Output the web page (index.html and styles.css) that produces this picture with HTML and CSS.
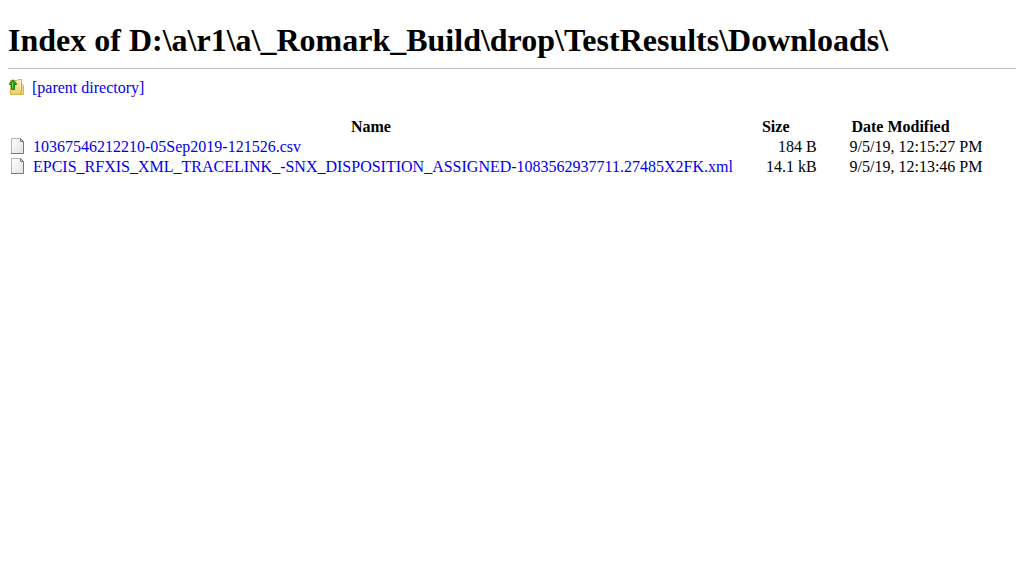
FILE: index.html
```html
<!DOCTYPE html>
<html lang="en">
<head>
<meta charset="utf-8">
<title>Index of D:\a\r1\a\_Romark_Build\drop\TestResults\Downloads\</title>
<link rel="stylesheet" href="styles.css">
</head>
<body>
<svg class="defs" aria-hidden="true">
<defs>
<linearGradient id="paper" x1="0" y1="0" x2="1" y2="1"><stop offset="0" stop-color="#fff"/><stop offset="1" stop-color="#e2e2e2"/></linearGradient>
<linearGradient id="folder" x1="0" y1="0" x2="0" y2="1"><stop offset="0" stop-color="#fbeeb4"/><stop offset="1" stop-color="#edcd68"/></linearGradient>
<symbol id="file" viewBox="0 0 16 16"><path d="M2.500.5h9l3 3v12h-12z" fill="url(#paper)"/><path d="M2.500 15.500V.5h9" fill="none" stroke="#b4b4b4"/><path d="M2 15.500h12.500v-12" fill="none" stroke="#777"/><path d="M11.500.5v3h3z" fill="#ddd" stroke="#777"/></symbol>
</defs>
</svg>
<h1 class="title">Index of D:\a\r1\a\_Romark_Build\drop\TestResults\Downloads\</h1>
<div class="parent">
<svg class="icon" viewBox="0 0 16 16" aria-hidden="true"><path d="M2.500 1.500H9l1-1h3.500v4l2 2v9h-13z" fill="url(#folder)" stroke="#d6b65c"/><path d="M13.500 1v10l-1 4" fill="none" stroke="#c9a64a"/><path d="M12.500 1v10" stroke="#fff6d0"/><path d="M5 .7 8.500 4.500V5.500H6.500v5h-3v-5h-2v-1z" fill="#2fa324" stroke="#1c8018"/><path d="M4.500 3v7" stroke="#63c94b"/></svg>
<a class="link" href="#parent">[parent directory]</a>
</div>
<table class="listing">
<thead>
<tr><th>Name</th><th>Size</th><th>Date Modified</th></tr>
</thead>
<tbody>
<tr><td><span class="file"><svg class="icon" aria-hidden="true"><use href="#file"/></svg><a class="link" href="#csv">10367546212210-05Sep2019-121526.csv</a></span></td><td class="size">184 B</td><td class="date">9/5/19, 12:15:27 PM</td></tr>
<tr><td><span class="file"><svg class="icon" aria-hidden="true"><use href="#file"/></svg><a class="link" href="#xml">EPCIS_RFXIS_XML_TRACELINK_-SNX_DISPOSITION_ASSIGNED-1083562937711.27485X2FK.xml</a></span></td><td class="size">14.1 kB</td><td class="date">9/5/19, 12:13:46 PM</td></tr>
</tbody>
</table>
</body>
</html>
```
FILE: styles.css
```css
body {
  margin: 8px;
  background: #fff;
  color: #000;
  font: 16px/18px "Liberation Serif", "Times New Roman", serif;
}
.defs {
  position: absolute;
  width: 0;
  height: 0;
}
.title {
  margin: 14px 0 10px;
  padding-bottom: 9px;
  border-bottom: 1px solid #c0c0c0;
  font-size: 32px;
  line-height: 37px;
  font-weight: bold;
}
.parent,
.file {
  display: flex;
  align-items: flex-start;
  gap: 8px;
}
.link {
  color: #0000ee;
  text-decoration: none;
}
.icon {
  flex: none;
  width: 16px;
  height: 16px;
}
.listing {
  margin-top: 20px;
  border-spacing: 0;
}
.listing th,
.listing td {
  padding: 1px;
  white-space: nowrap;
}
.listing .size,
.listing .date {
  padding-left: 32px;
}
.listing .size {
  text-align: right;
}
```
